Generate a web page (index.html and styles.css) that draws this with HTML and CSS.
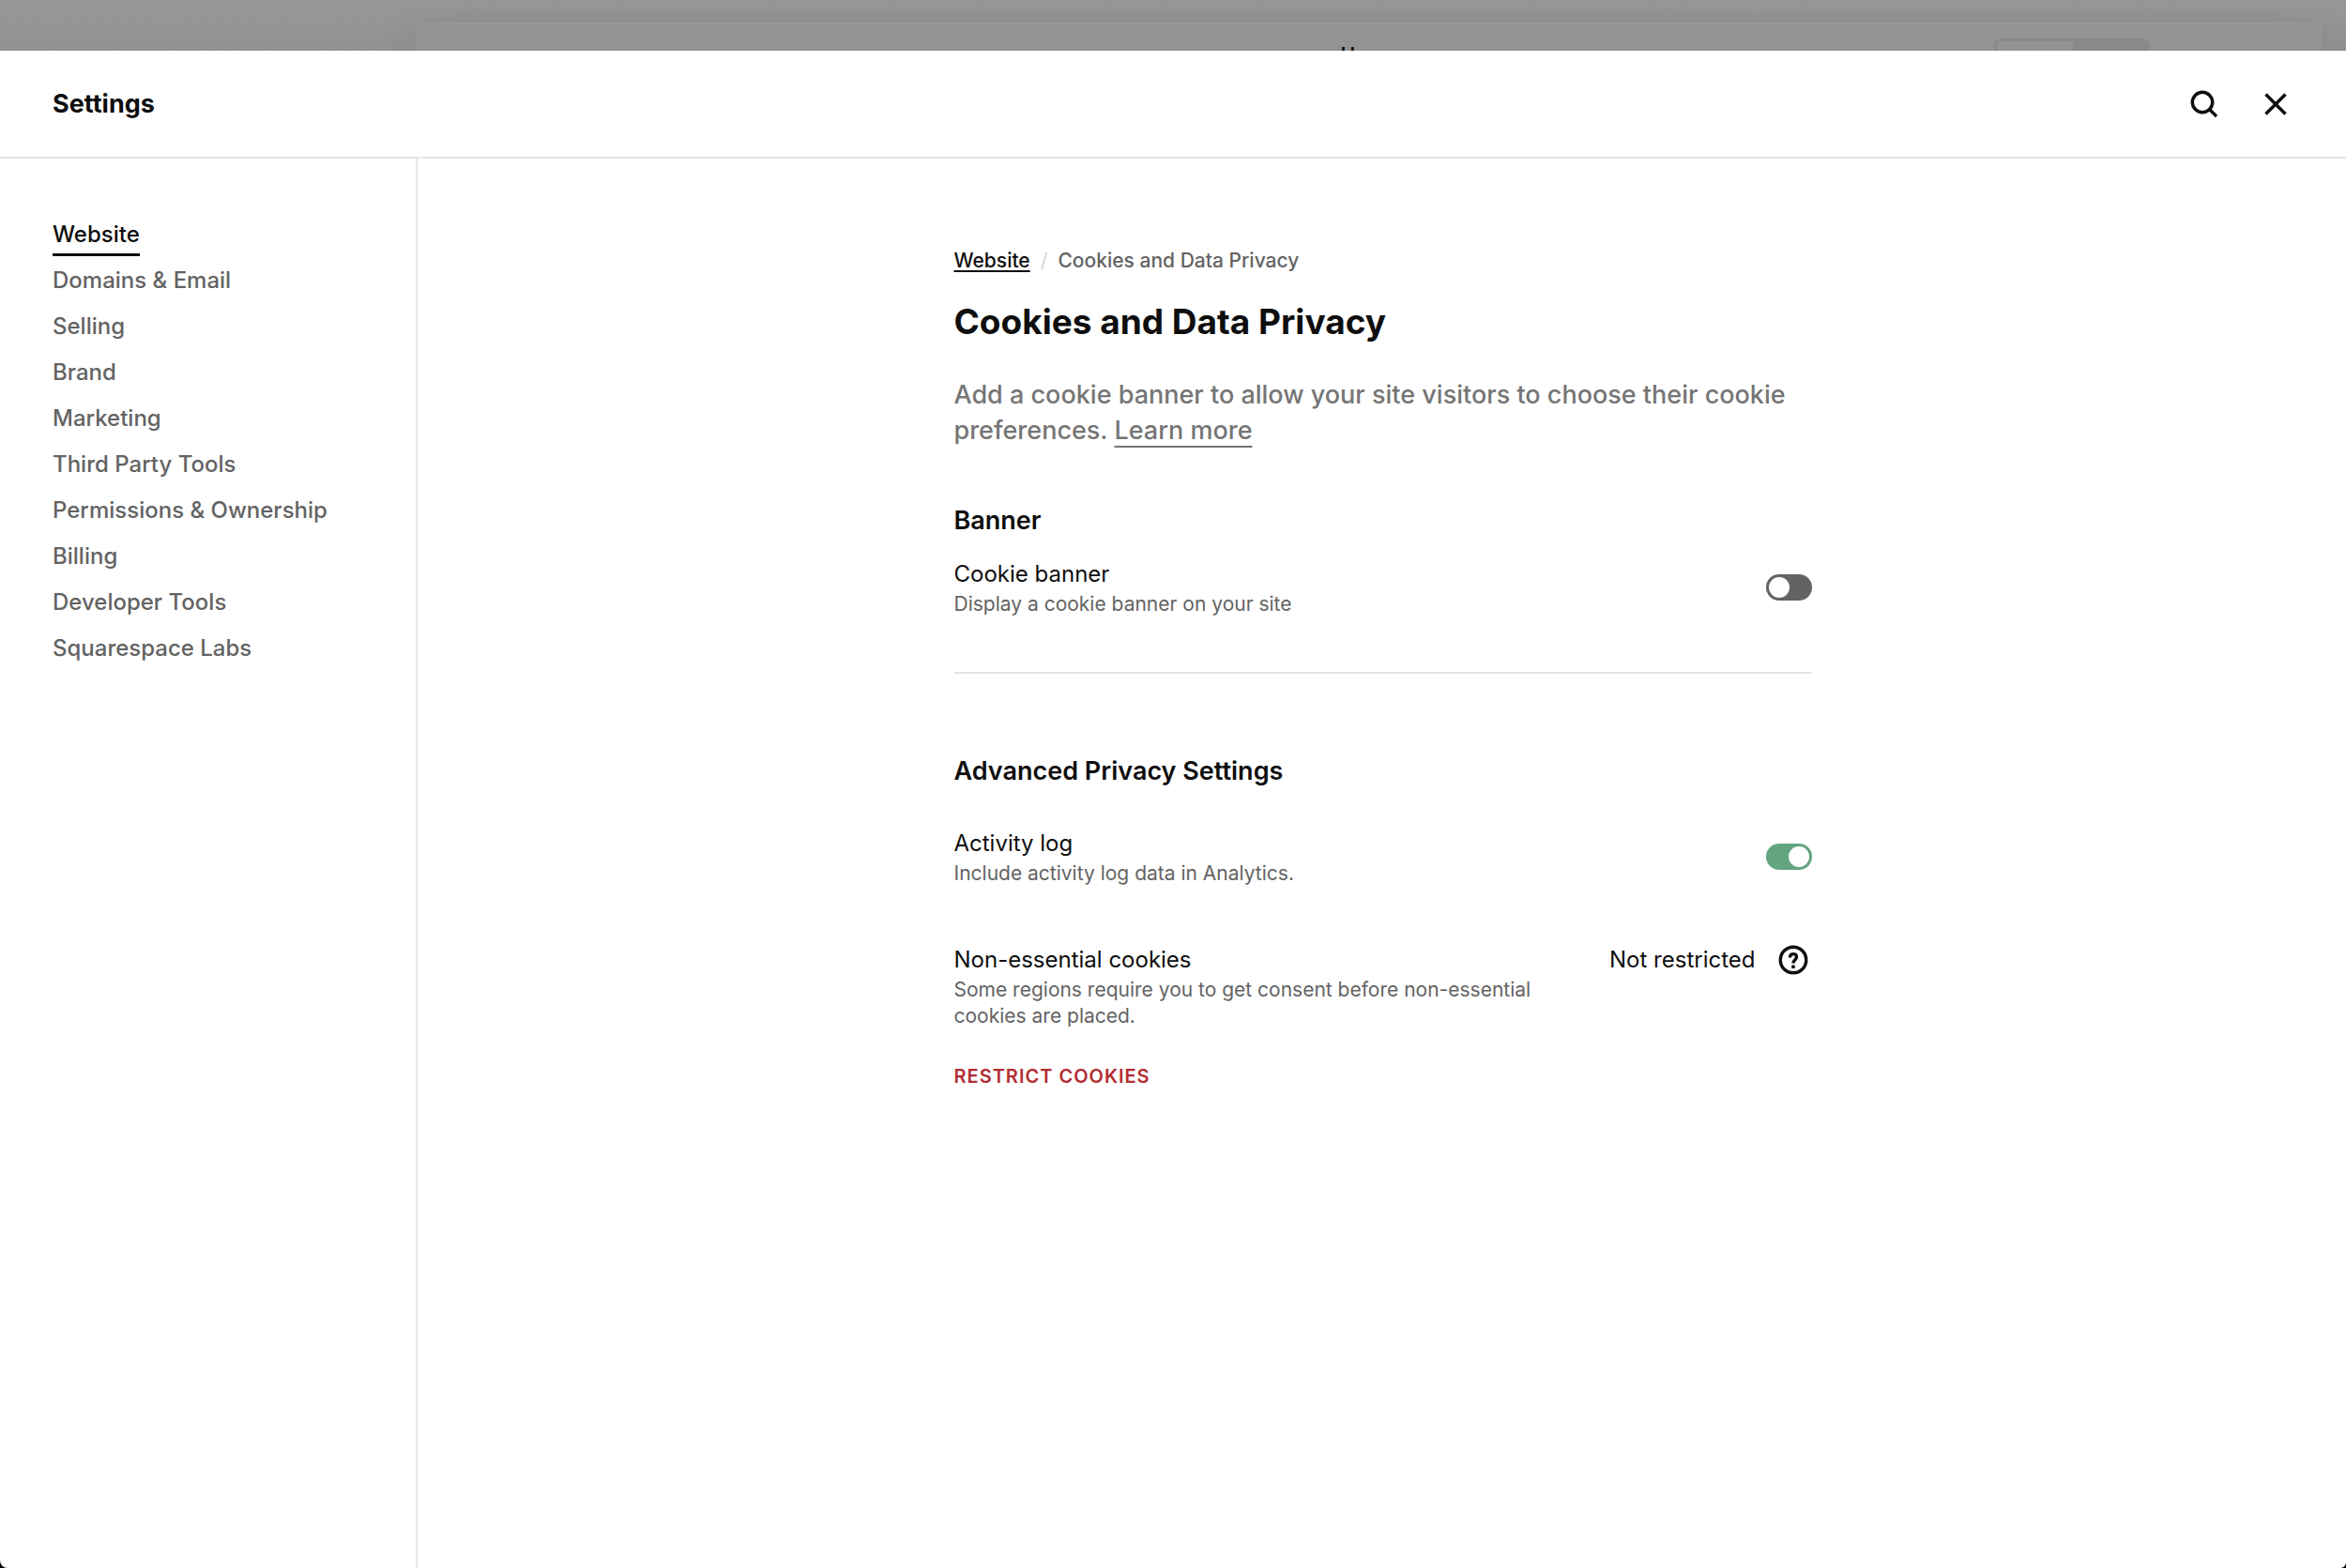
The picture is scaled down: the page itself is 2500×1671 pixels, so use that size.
FILE: index.html
```html
<!DOCTYPE html>
<html lang="en">
<head>
<meta charset="utf-8">
<title>Settings – Cookies and Data Privacy</title>
<meta name="viewport" content="width=device-width, initial-scale=1">
<link rel="stylesheet" href="styles.css">
</head>
<body>
<div class="app">
  <div class="backdrop" aria-hidden="true">
    <div class="preview">
      <span class="preview-title">Home</span>
      <div class="segment"><span class="segment-on"></span></div>
    </div>
  </div>
  <div class="modal" role="dialog" aria-labelledby="modal-title">
    <header class="modal-header">
      <h2 class="modal-title" id="modal-title">Settings</h2>
      <div class="modal-actions">
        <button class="icon-button" type="button" aria-label="Search">
          <svg class="icon" viewBox="0 0 40 40"><circle cx="18" cy="18" r="10.700"/><path d="M25.500 25.500 33 33"/></svg>
        </button>
        <button class="icon-button" type="button" aria-label="Close">
          <svg class="icon" viewBox="0 0 40 40"><path d="M9.500 9.500 30.500 30.500M30.500 9.500 9.500 30.500"/></svg>
        </button>
      </div>
    </header>
    <div class="modal-body">
      <nav class="sidebar" aria-label="Settings">
        <ul class="nav">
          <li><a class="nav-link nav-link-active" href="#" aria-current="page">Website</a></li>
          <li><a class="nav-link" href="#">Domains &amp; Email</a></li>
          <li><a class="nav-link" href="#">Selling</a></li>
          <li><a class="nav-link" href="#">Brand</a></li>
          <li><a class="nav-link" href="#">Marketing</a></li>
          <li><a class="nav-link" href="#">Third Party Tools</a></li>
          <li><a class="nav-link" href="#">Permissions &amp; Ownership</a></li>
          <li><a class="nav-link" href="#">Billing</a></li>
          <li><a class="nav-link" href="#">Developer Tools</a></li>
          <li><a class="nav-link" href="#">Squarespace Labs</a></li>
        </ul>
      </nav>
      <main class="content">
        <div class="panel">
          <nav class="breadcrumb" aria-label="Breadcrumb">
            <a class="breadcrumb-link" href="#">Website</a>
            <span class="breadcrumb-divider">/</span>
            <span>Cookies and Data Privacy</span>
          </nav>
          <h1 class="title">Cookies and Data Privacy</h1>
          <p class="lead">Add a cookie banner to allow your site visitors to choose their cookie preferences. <a class="lead-link" href="#">Learn more</a></p>

          <section class="section">
            <h2 class="heading">Banner</h2>
            <div class="row">
              <div class="row-text">
                <label class="row-label" for="cookie-banner">Cookie banner</label>
                <p class="row-note" id="cookie-banner-note">Display a cookie banner on your site</p>
              </div>
              <input class="toggle" type="checkbox" role="switch" id="cookie-banner" aria-describedby="cookie-banner-note">
            </div>
          </section>

          <section class="section section-advanced">
            <h2 class="heading">Advanced Privacy Settings</h2>
            <div class="row">
              <div class="row-text">
                <label class="row-label" for="activity-log">Activity log</label>
                <p class="row-note" id="activity-log-note">Include activity log data in Analytics.</p>
              </div>
              <input class="toggle" type="checkbox" role="switch" id="activity-log" aria-describedby="activity-log-note" checked>
            </div>
            <div class="row row-top">
              <div class="row-text">
                <h3 class="row-label">Non-essential cookies</h3>
                <p class="row-note">Some regions require you to get consent before non-essential cookies are placed.</p>
              </div>
              <div class="status">
                <span>Not restricted</span>
                <button class="help-button" type="button" aria-label="About non-essential cookies">
                  <svg class="help-icon" viewBox="0 2 40 36"><circle cx="20" cy="20" r="13.800"/><path d="M16.500 17.600C16.500 15 17.900 13.600 20 13.600S23.500 15 23.500 17C23.500 19.800 20 20 20 23.600M20 25.600V29"/></svg>
                </button>
              </div>
            </div>
            <button class="text-button" type="button">RESTRICT COOKIES</button>
          </section>
        </div>
      </main>
    </div>
  </div>
</div>
</body>
</html>
```

FILE: styles.css
```css
* {
  box-sizing: border-box;
}

body,
h1,
h2,
h3,
p,
ul {
  margin: 0;
  padding: 0;
}

body {
  background: #000;
  color: #0e0e0e;
  font-family: Inter, "Liberation Sans", sans-serif;
  font-size: 24px;
  line-height: 32px;
}

button {
  padding: 0;
  border: 0;
  background: none;
  color: inherit;
  font: inherit;
  cursor: pointer;
}

.app {
  display: flex;
  flex-direction: column;
  min-height: 100vh;
}

/* Dimmed site preview behind the dialog */
.backdrop {
  height: 54px;
  padding: 24px 26px 0 443px;
  overflow: hidden;
  background: linear-gradient(#989898, #919191);
}

.preview {
  position: relative;
  height: 120px;
  padding: 17px 183px 0;
  background: linear-gradient(#969696 0, #929292 30px);
  box-shadow: 0 0 40px rgba(0, 0, 0, 0.08);
  display: flex;
  justify-content: flex-end;
}

.preview-title {
  position: absolute;
  top: 21px;
  left: 50%;
  margin-left: -30px;
  color: #0e0e0e;
  font-size: 21px;
  font-weight: 600;
  line-height: 28px;
}

.segment {
  width: 166px;
  height: 48px;
  padding: 3px;
  border-radius: 8px;
  background: #898989;
}

.segment-on {
  display: block;
  width: 81px;
  height: 42px;
  border-radius: 4px;
  background: #939393;
}

.modal {
  flex: 1;
  display: flex;
  flex-direction: column;
  border-radius: 0 0 6px 8px;
  background: #fff;
}

.modal-header {
  display: flex;
  align-items: center;
  justify-content: space-between;
  padding: 37px 55px 36px 56px;
  border-bottom: 2px solid #e7e7e7;
}

.modal-title {
  font-size: 27px;
  font-weight: 700;
  line-height: 40px;
}

.modal-actions {
  display: flex;
  gap: 36px;
}

.icon-button {
  width: 40px;
  height: 40px;
}

.icon {
  display: block;
  fill: none;
  stroke: #0e0e0e;
  stroke-width: 3.4;
}

.modal-body {
  flex: 1;
  display: flex;
}

.sidebar {
  flex: none;
  width: 445px;
  padding: 59px 56px;
  border-right: 2px solid #e7e7e7;
}

.nav {
  list-style: none;
}

.nav li {
  height: 49px;
}

.nav-link {
  display: inline-block;
  padding: 6px 0 4px;
  color: #636363;
  font-weight: 500;
  text-decoration: none;
}

.nav-link-active {
  border-bottom: 3px solid #0e0e0e;
  color: #0e0e0e;
}

.content {
  flex: 1;
  padding: 93px 58px 93px 60px;
}

.panel {
  max-width: 914px;
  margin: 0 auto;
}

.breadcrumb {
  display: flex;
  gap: 11px;
  color: #636363;
  font-size: 21px;
  font-weight: 500;
}

.breadcrumb-link {
  color: #0e0e0e;
  text-decoration-thickness: 2px;
  text-underline-offset: 3px;
}

.breadcrumb-divider {
  color: #dcdcdc;
}

.title {
  margin-top: 25px;
  font-size: 37px;
  font-weight: 700;
  line-height: 48px;
}

.lead {
  margin-top: 35px;
  color: #757575;
  font-size: 27px;
  font-weight: 500;
  line-height: 38px;
}

.lead-link {
  color: inherit;
  text-decoration-thickness: 2px;
  text-underline-offset: 7px;
}

.section {
  padding: 57px 0 58px;
}

.section-advanced {
  padding-top: 84px;
  border-top: 2px solid #e4e4e4;
}

.heading {
  font-size: 27px;
  font-weight: 600;
  line-height: 40px;
}

.row {
  display: flex;
  align-items: center;
  justify-content: space-between;
  gap: 80px;
  margin-top: 19px;
}

.section-advanced .row {
  margin-top: 39px;
}

.section-advanced .row-top {
  align-items: flex-start;
  margin-top: 60px;
}

.row-text {
  max-width: 640px;
}

.row-label {
  display: block;
  font-size: 24px;
  font-weight: 400;
  line-height: 36px;
}

.row-note {
  color: #636363;
  font-size: 21px;
  line-height: 28px;
}

.toggle {
  appearance: none;
  flex: none;
  width: 49px;
  height: 28px;
  margin: 0;
  padding: 3px;
  border-radius: 14px;
  background: #636363;
  cursor: pointer;
}

.toggle::before {
  content: "";
  display: block;
  width: 22px;
  height: 22px;
  border-radius: 50%;
  background: #fff;
}

.toggle:checked {
  background: #63a57f;
}

.toggle:checked::before {
  margin-left: auto;
}

.status {
  flex: none;
  display: flex;
  align-items: center;
  gap: 20px;
  line-height: 36px;
}

.help-button {
  width: 40px;
  height: 36px;
}

.help-icon {
  display: block;
  width: 40px;
  height: 36px;
  fill: none;
  stroke: #0e0e0e;
  stroke-width: 3.4;
}

.text-button {
  display: block;
  margin-top: 34px;
  color: #b32d32;
  font-size: 20px;
  font-weight: 600;
  letter-spacing: 1px;
  line-height: 32px;
}
```
